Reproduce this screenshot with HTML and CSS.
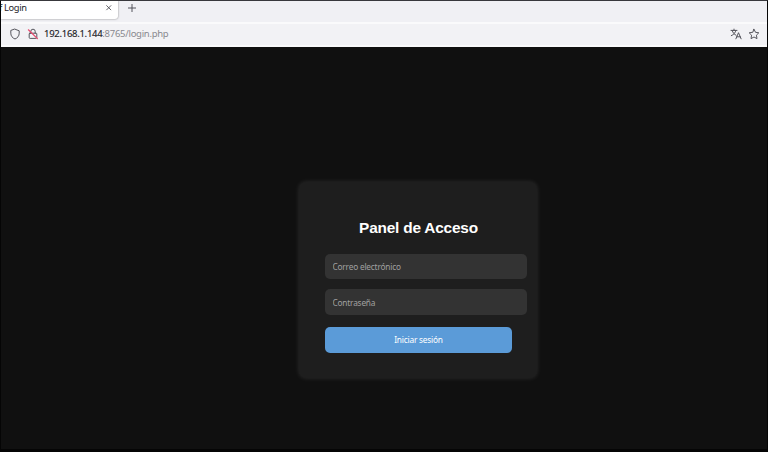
FILE: index.html
```html
<!DOCTYPE html>
<html lang="es">
<head>
<meta charset="utf-8">
<title>Login</title>
<link rel="stylesheet" href="styles.css">
</head>
<body>
<div class="window">
  <header class="tabs">
    <div class="tab">
      <span class="tab-title"><span class="tab-cut">f</span>Login</span>
      <svg class="close" viewBox="0 0 6 6"><path d="M.4.4l5.2 5.2M5.6.4L.4 5.6"/></svg>
    </div>
    <svg class="plus" viewBox="0 0 8 8"><path d="M4 0v8M0 4h8"/></svg>
  </header>
  <div class="toolbar">
    <svg class="icon shield" viewBox="0 0 12 12"><path d="M6 1.2L10.2 2.8V5.2C10.2 8 8.5 10 6 11 3.5 10 1.8 8 1.8 5.2V2.8Z"/></svg>
    <svg class="icon lock" viewBox="0 0 12 12"><path d="M3.8 5.2V3.4a2.2 2.2 0 0 1 4.4 0v1.8M2.9 5.2h6.2a.7.7 0 0 1 .7.7v3.6a.9.9 0 0 1-.9.9H3.1a.9.9 0 0 1-.9-.9V5.9a.7.7 0 0 1 .7-.7Z"/><path class="slash" d="M1.4 1.8l9 8.8"/></svg>
    <div class="url"><span class="host">192.168.1.144</span>:8765/login.php</div>
    <svg class="icon translate" viewBox="0 0 12 12"><path d="M1 2.4h6M4 1.1v1.3M5.9 2.4C5.5 4.6 3.8 6.6 1.3 7.7M2.2 2.6C2.8 4.8 4.3 6.4 6 7.2M5.9 10.8L8.5 4.7l2.6 6.1M6.8 8.8h3.4"/></svg>
    <svg class="icon star" viewBox="0 0 12 12"><path d="M6 1.3l1.5 3 3.3.5-2.4 2.4.6 3.4L6 9l-3 1.6.6-3.4L1.2 4.8l3.3-.5Z"/></svg>
  </div>
  <main class="page">
    <form class="card">
      <h1>Panel de Acceso</h1>
      <input type="email" placeholder="Correo electrónico">
      <input type="password" placeholder="Contraseña">
      <button type="button">Iniciar sesión</button>
    </form>
  </main>
</div>
</body>
</html>
```
FILE: styles.css
```css
* { box-sizing: border-box; }
body { margin: 0; background: #050505; font-family: "Noto Sans", sans-serif; }
.window {
  height: 452px;
  display: flex;
  flex-direction: column;
  border: 1px solid #050505;
  border-top-color: #38383c;
  border-bottom-width: 3px;
  overflow: hidden;
}
.tabs { flex: none; height: 21px; display: flex; background: #f0f0f4; }
.tab {
  width: 117px;
  height: 17.5px;
  padding: 0 7px 0 3px;
  display: flex;
  align-items: center;
  justify-content: space-between;
  background: #fff;
  border-radius: 0 0 3px 0;
  box-shadow: 0 0 2px rgba(0, 0, 0, .5);
}
.tab-title { font-size: 9.3px; letter-spacing: -.3px; line-height: 14px; color: #242429; margin-top: -3px; white-space: nowrap; }
.tab-cut { margin-left: -5px; margin-right: 2px; }
svg { fill: none; stroke: #4d4d54; stroke-width: .95; overflow: visible; flex: none; }
.close { width: 5.5px; height: 5.5px; margin-top: -4px; }
.plus { width: 8px; height: 8px; margin: 3px 0 0 10px; }
.toolbar {
  flex: none;
  height: 25px;
  padding: 0 7px 1px 8px;
  display: flex;
  align-items: center;
  background: #f2f2f5;
  border-top: 2px solid #fafafb;
  border-bottom: 2px solid #fafafb;
}
.icon { width: 12px; height: 12px; stroke-linejoin: round; stroke-linecap: round; }
.lock { margin-left: 6px; }
.lock .slash { stroke: #e8486e; stroke-width: 1.2; }
.url { flex: 1; margin-left: 5px; font-size: 9.5px; letter-spacing: -.28px; line-height: 14px; color: #88888e; white-space: nowrap; }
.host { color: #202025; -webkit-text-stroke: .12px #202025; }
.star { margin-left: 6px; }
.page { flex: 1; background: #101010; padding: 135px 0 0 298px; }
.card {
  width: 238px;
  height: 196px;
  padding: 35.5px 25px 0 26px;
  border-radius: 7px;
  background: #1e1e1e;
  box-shadow: 0 0 5px rgba(255, 255, 255, .12);
}
h1 {
  margin: 0 0 17px;
  font: bold 15.4px/19px "Liberation Sans", sans-serif;
  letter-spacing: -.2px;
  color: #fff;
  text-align: center;
  white-space: nowrap;
}
input, button { display: block; height: 25.5px; border: 0; border-radius: 5px; font: 8.3px/12px "Noto Sans", sans-serif; letter-spacing: -.2px; }
input { width: 202px; padding: 1px 7.5px 0; margin: 0 0 10px; background: #333; color: #fff; }
input::placeholder { color: #a0a0a0; opacity: 1; }
button { width: 187px; margin-top: 12.5px; padding: 1px 0 0; background: #5b9bd8; color: #fff; }
```
